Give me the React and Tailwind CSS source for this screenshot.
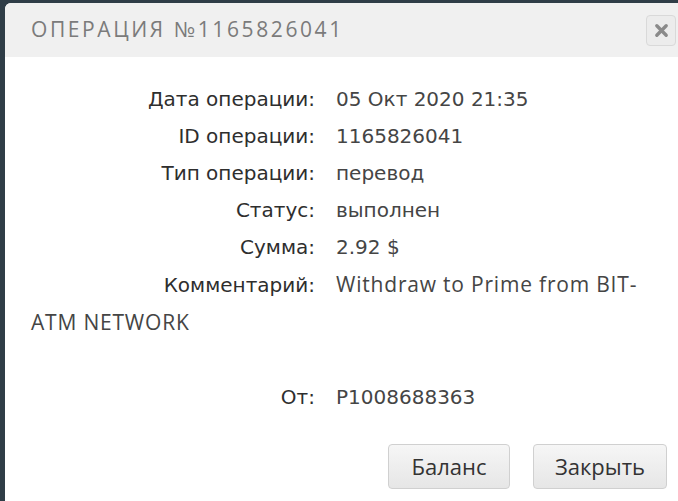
import React from 'react';

const rows = [
  { label: 'Дата операции:', value: '05 Окт 2020 21:35' },
  { label: 'ID операции:', value: '1165826041' },
  { label: 'Тип операции:', value: 'перевод' },
  { label: 'Статус:', value: 'выполнен' },
  { label: 'Сумма:', value: '2.92 $' },
  { label: 'Комментарий:', value: 'Withdraw to Prime from BIT-ATM NETWORK', comment: true },
  { label: '', value: '' },
  { label: 'От:', value: 'P1008688363' },
];

const App = () => {
  return (
    <div className="h-[501px] w-[678px] overflow-hidden bg-[#2f3d47] pl-[5px] pt-[3px]">
      <div className="flex h-full flex-col overflow-hidden rounded-tl-[6px] bg-white">
        {/* Header */}
        <div className="flex h-[54px] items-center justify-between bg-[#f0f0f0] pl-[26px] pr-[2px]">
          <h2 className="text-[21px] uppercase tracking-[2.6px] text-[#7b7b7b]" style={{ fontFamily: '"Open Sans", sans-serif' }}>
            Операция №1165826041
          </h2>
          <button className="flex h-[31px] w-[30px] items-center justify-center rounded-[4px] border border-[#d9d9d9] bg-[#ececec]">
            <svg viewBox="0 0 16 16" className="h-[15px] w-[15px]">
              <path d="M3 3 L13 13 M13 3 L3 13" stroke="#8a8a8a" strokeWidth="3.6" strokeLinecap="round" />
            </svg>
          </button>
        </div>

        {/* Body */}
        <div className="pl-[26px] pr-[38px] pt-[24px] text-[20px] leading-[37px]" style={{ fontFamily: '"DejaVu Sans", sans-serif' }}>
          {rows.map((row, i) => (
            <div key={i} className="min-h-[37px]">
              <span className="inline-block w-[284px] text-right text-[#2e2e2e]">{row.label}</span>
              <span
                className={`ml-[21px] text-[#454545] ${row.comment ? 'text-[21px] tracking-[0.8px]' : ''}`}
                style={row.comment ? { fontFamily: '"Open Sans", sans-serif' } : undefined}
              >
                {row.value}
              </span>
            </div>
          ))}
        </div>

        {/* Footer */}
        <div className="mt-auto flex justify-end gap-[23px] pb-[12px] pr-[11px]">
          <button className="h-[45px] w-[122px] rounded-[4px] border border-[#d0d0d0] bg-gradient-to-b from-[#f6f6f6] to-[#e6e6e6] text-[22px] text-[#333]" style={{ fontFamily: '"Open Sans", sans-serif' }}>
            Баланс
          </button>
          <button className="h-[45px] w-[134px] rounded-[4px] border border-[#d0d0d0] bg-gradient-to-b from-[#f6f6f6] to-[#e6e6e6] text-[22px] text-[#333]" style={{ fontFamily: '"Open Sans", sans-serif' }}>
            Закрыть
          </button>
        </div>
      </div>
    </div>
  );
};

export default App;
